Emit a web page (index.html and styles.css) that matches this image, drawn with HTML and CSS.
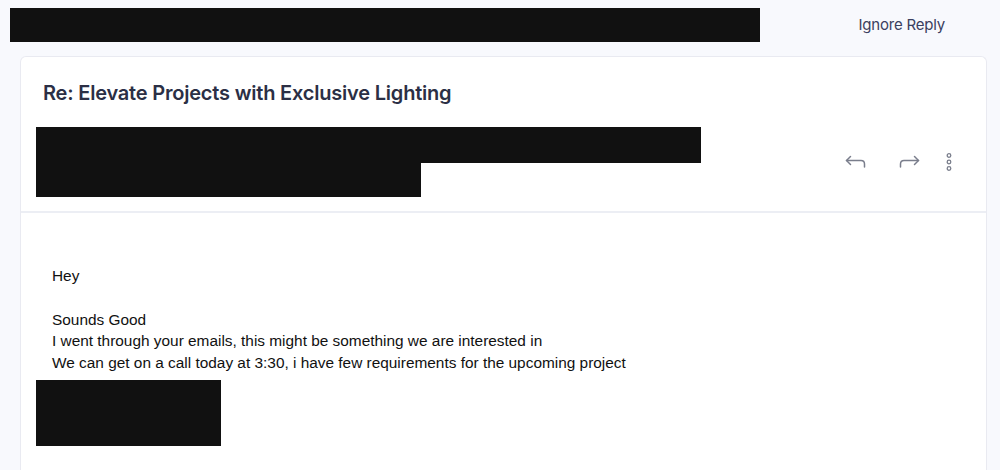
FILE: index.html
```html
<!DOCTYPE html>
<html>
<head>
<meta charset="utf-8">
<link rel="stylesheet" href="styles.css">
</head>
<body>
<div class="topbar">
  <div class="redact redact-top"></div>
  <button class="ignore">Ignore Reply</button>
</div>
<div class="card">
  <div class="card-head">
    <h1 class="subject">Re: Elevate Projects with Exclusive Lighting</h1>
    <div class="meta-row">
      <div class="sender">
        <div class="redact redact-a"></div>
        <div class="redact redact-b"></div>
      </div>
      <div class="actions">
        <svg class="icon" width="21" height="14" viewBox="0 0 21 14" fill="none" stroke="currentColor" stroke-width="1.5" stroke-linecap="round" stroke-linejoin="round"><path d="M5.5 1.5 L1.5 5.5 L5.5 9.5"/><path d="M1.5 5.5 H16 Q19.5 5.5 19.5 9 V12"/></svg>
        <svg class="icon" width="21" height="14" viewBox="0 0 21 14" fill="none" stroke="currentColor" stroke-width="1.5" stroke-linecap="round" stroke-linejoin="round"><path d="M15.5 1.5 L19.5 5.5 L15.5 9.5"/><path d="M19.5 5.5 H5 Q1.5 5.5 1.5 9 V12"/></svg>
        <svg class="icon dots" width="8" height="20" viewBox="0 0 8 20" fill="none" stroke="currentColor" stroke-width="1.3"><circle cx="4" cy="3.5" r="1.8"/><circle cx="4" cy="10" r="1.8"/><circle cx="4" cy="16.5" r="1.8"/></svg>
      </div>
    </div>
  </div>
  <div class="card-body">
    <p>Hey</p>
    <p>Sounds Good<br>I went through your emails, this might be something we are interested in<br>We can get on a call today at 3:30, i have few requirements for the upcoming project</p>
    <div class="redact redact-sig"></div>
  </div>
</div>
</body>
</html>
```
FILE: styles.css
```css
html, body {
  margin: 0;
  padding: 0;
  background: #f8f9fd;
  height: 470px;
  overflow: hidden;
}
.redact {
  background: #111111;
}
.topbar {
  display: flex;
  align-items: flex-start;
  justify-content: space-between;
  padding: 8px 0 0 10px;
  height: 56px;
  box-sizing: border-box;
}
.redact-top {
  width: 750px;
  height: 34px;
}
.ignore {
  background: none;
  border: none;
  font-family: "Inter", "Liberation Sans", sans-serif;
  font-size: 15px;
  color: #3b4060;
  margin: 7px 55px 0 0;
  padding: 0;
  letter-spacing: -0.2px;
}
.card {
  margin-left: 20px;
  width: 967px;
  height: 414px;
  background: #ffffff;
  border: 1px solid #e9eaf1;
  border-bottom: none;
  border-radius: 6px 6px 0 0;
  box-sizing: border-box;
}
.card-head {
  padding: 22px 0 14px 22px;
  border-bottom: 2px solid #eceef4;
}
.subject {
  margin: 0;
  font-family: "Inter", "Liberation Sans", sans-serif;
  font-size: 20px;
  font-weight: 600;
  color: #2b2f45;
  letter-spacing: -0.2px;
  line-height: 28px;
}
.meta-row {
  display: flex;
  justify-content: space-between;
  align-items: center;
  margin-top: 20px;
  margin-left: -7px;
}
.sender {
  display: flex;
  flex-direction: column;
}
.redact-a {
  width: 665px;
  height: 36px;
}
.redact-b {
  width: 385px;
  height: 34px;
}
.actions {
  display: flex;
  align-items: center;
  gap: 33px;
  margin-right: 33px;
  color: #7a7e8c;
}
.dots {
  margin-left: -8px;
}
.card-body {
  padding: 52px 0 0 31px;
  font-family: "Liberation Sans", Arial, sans-serif;
  font-size: 15.4px;
  line-height: 21.6px;
  color: #111111;
}
.card-body p {
  margin: 0 0 22px 0;
}
.redact-sig {
  width: 185px;
  height: 66px;
  margin-left: -16px;
  margin-top: -15px;
}
```
